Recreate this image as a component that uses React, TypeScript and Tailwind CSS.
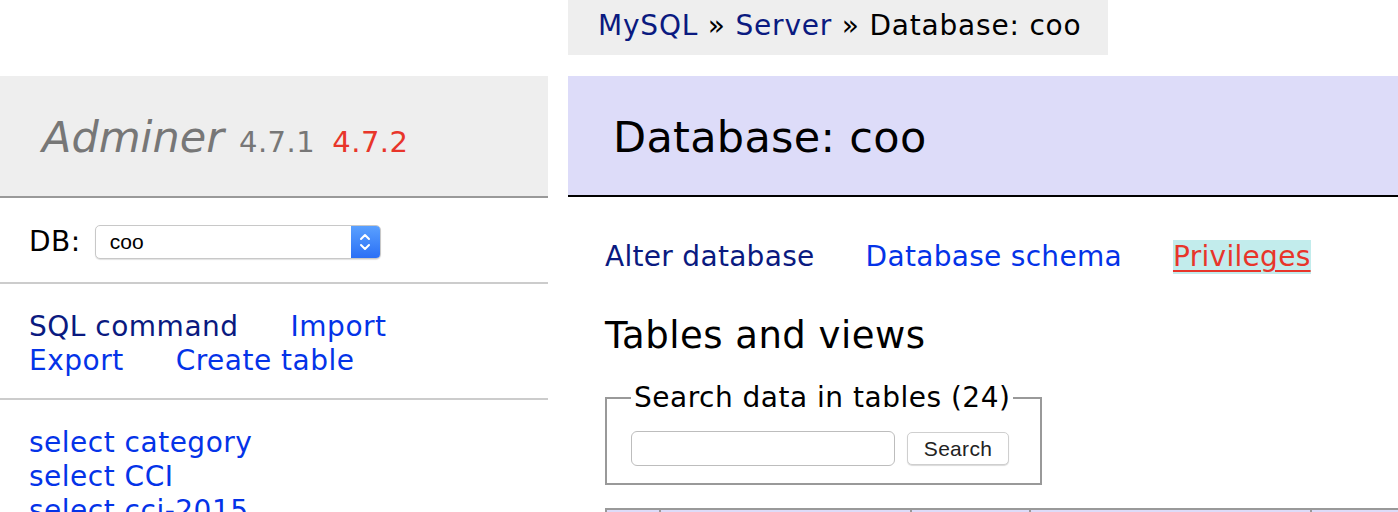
import React from 'react';

const font = "font-['DejaVu_Sans',Verdana,sans-serif]";

function FakeSelect() {
    return (
        <div className="flex h-[34px] w-[286px] items-stretch rounded-[5px] border border-[#c8c8c8] bg-white shadow-[0_1px_1px_rgba(0,0,0,0.12)] overflow-hidden">
            <div className="flex flex-1 items-center pl-[14px] font-['Liberation_Sans',Arial,sans-serif] text-[21px] tracking-normal text-black">coo</div>
            <div className="flex w-[29px] items-center justify-center bg-gradient-to-b from-[#5aa0ff] to-[#2b6ff5]">
                <svg width="12" height="20" viewBox="0 0 12 20" fill="none" stroke="white" strokeWidth="2" strokeLinecap="round" strokeLinejoin="round">
                    <path d="M2 7 L6 3 L10 7" />
                    <path d="M2 13 L6 17 L10 13" />
                </svg>
            </div>
        </div>
    );
}

const cols = ['w-[54px]', 'w-[251px]', 'w-[119px]', 'w-[281px]', 'w-[88px]'];

export default function App() {
    return (
        <div className={`${font} relative flex h-[512px] w-[1398px] overflow-hidden bg-white text-[28px] leading-[34px] tracking-[0.5px] text-black`}>
            {/* Sidebar menu */}
            <div className="w-[548px] shrink-0 pt-[76px]">
                <h1 className="flex h-[122px] items-center gap-[15px] border-b-2 border-[#999] bg-[#eeeeee] pl-[42px] pt-[2px] text-[#777]">
                    <span className="text-[43px] italic leading-[50px] tracking-normal">Adminer</span>
                    <span className="flex gap-[17px] pt-[10px] text-[29px] tracking-[0.5px]">
                        <span>4.7.1</span>
                        <span className="text-[#e8352a]">4.7.2</span>
                    </span>
                </h1>
                <div className="flex h-[86px] items-center gap-[14px] border-b-2 border-[#cccccc] px-[29px] pt-[3px]">
                    <span>DB:</span>
                    <FakeSelect />
                </div>
                <div className="border-b-2 border-[#cccccc] px-[29px] pt-[26px] pb-[20px]">
                    <div className="flex gap-[52px]">
                        <a className="text-[#0a1a80]">SQL command</a>
                        <a className="text-[#0433e8]">Import</a>
                    </div>
                    <div className="flex gap-[52px]">
                        <a className="text-[#0433e8]">Export</a>
                        <a className="text-[#0433e8]">Create table</a>
                    </div>
                </div>
                <ul className="px-[29px] pt-[26px] text-[#0433e8]">
                    <li>select category</li>
                    <li>select CCI</li>
                    <li>select cci-2015</li>
                </ul>
            </div>

            {/* Main content */}
            <div className="ml-[20px] flex-1">
                <div className="h-[55px] w-[540px] bg-[#eeeeee] px-[30px] pt-[9px] tracking-[0.8px] whitespace-nowrap">
                    <a className="text-[#0a1a80]">MySQL</a> » <a className="text-[#0a1a80]">Server</a> » Database: coo
                </div>
                <h2 className="mt-[21px] flex h-[121px] items-center border-b-2 border-black bg-[#dddcf9] pl-[45px] pt-[2px] text-[43px] tracking-[0.3px]">
                    Database: coo
                </h2>
                <div className="pl-[37px]">
                    <p className="mt-[43px] flex gap-[51px] tracking-[0.3px]">
                        <a className="text-[#0a1a80]">Alter database</a>
                        <a className="text-[#0433e8]">Database schema</a>
                        <a className="bg-[#c2ecec] text-[#e8352a] underline decoration-2 underline-offset-[4px]">Privileges</a>
                    </p>
                    <h3 className="mt-[42px] text-[37px] leading-[40px] tracking-[0.5px]">Tables and views</h3>
                    <fieldset className="mt-[25px] w-[437px] border-2 border-[#999] px-[24px] pb-[17px]">
                        <legend className="px-[3px]">Search data in tables (24)</legend>
                        <div className="mt-[16px] flex items-center gap-[12px]">
                            <div className="h-[35px] w-[264px] rounded-[6px] border border-[#bdbdbd] bg-white" />
                            <button className="h-[33px] w-[102px] rounded-[5px] border border-[#cfcfcf] bg-white font-['Liberation_Sans',Arial,sans-serif] text-[21px] leading-[31px] tracking-[0.3px] text-[#222] shadow-[0_1px_1px_rgba(0,0,0,0.15)]">
                                Search
                            </button>
                        </div>
                    </fieldset>
                    <div className="mt-[23px] flex w-fit border-t-2 border-[#999]">
                        {cols.map((w, i) => (
                            <div key={i} className={`${w} h-[12px] border-l-2 border-[#999] bg-[#dddcf9]`} />
                        ))}
                    </div>
                </div>
            </div>
        </div>
    );
}
